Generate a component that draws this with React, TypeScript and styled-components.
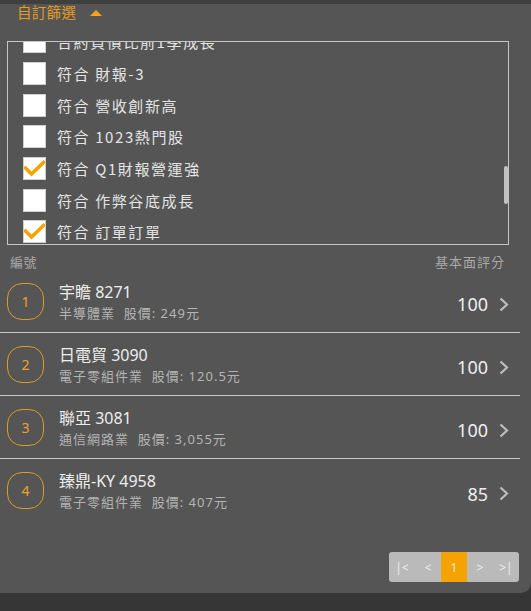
import React, { useLayoutEffect, useRef } from "react";
import styled, { createGlobalStyle } from "styled-components";

const Global = createGlobalStyle`
  html, body { margin: 0; padding: 0; background: #363636; }
  body { font-family: "Noto Sans", "Noto Sans CJK TC", sans-serif; }
  * { box-sizing: border-box; }
`;

const TopStrip = styled.div`
  height: 4px;
  background: #3f3f3f;
`;

const Panel = styled.div`
  background: #555555;
  border-bottom-right-radius: 10px;
  padding-bottom: 11px;
`;

const Header = styled.div`
  display: flex;
  align-items: center;
  gap: 14px;
  height: 16px;
  padding-left: 17px;
`;

const HeaderTitle = styled.span`
  color: #e39b24;
  font-family: "Noto Sans CJK TC", sans-serif;
  font-size: 14.5px;
  letter-spacing: 0.3px;
  line-height: 16px;
`;

const Triangle = styled.span`
  width: 0;
  height: 0;
  border-left: 6px solid transparent;
  border-right: 6px solid transparent;
  border-bottom: 6px solid #f2a41f;
  margin-top: 1px;
`;

const FilterBox = styled.div`
  position: relative;
  margin: 21px 22px 0 7px;
  height: 204px;
  border: 1px solid #c6c6c6;
`;

const FilterScroll = styled.div`
  height: 100%;
  overflow: hidden;
`;

const FilterRow = styled.label`
  display: flex;
  align-items: center;
  gap: 11px;
  height: 31.7px;
  padding-left: 15px;
  color: #e4e4e4;
  font-family: "Noto Sans CJK TC", sans-serif;
  font-size: 15px;
  letter-spacing: 1.6px;
  white-space: nowrap;
`;

const Box = styled.span`
  flex: none;
  width: 23px;
  height: 23px;
  background: #ffffff;
  border: 1px solid #cfcfcf;
  display: flex;
  align-items: center;
  justify-content: center;
`;

const Thumb = styled.div`
  position: absolute;
  right: 0;
  top: 124px;
  width: 4px;
  height: 38px;
  border-radius: 2px;
  background: #c2c2c2;
`;

const ColHeader = styled.div`
  display: flex;
  justify-content: space-between;
  height: 25px;
  padding: 9px 26px 0 10px;
  color: #a9a9a9;
  font-family: "Noto Sans CJK TC", sans-serif;
  font-size: 13px;
  line-height: 16px;
`;

const ColLabel = styled.span<{ $spacing?: number }>`
  letter-spacing: ${(p) => p.$spacing ?? 0.5}px;
`;

const List = styled.div`
  width: 520px;
`;

const Row = styled.div<{ $last?: boolean }>`
  display: flex;
  align-items: center;
  height: 63px;
  padding: 0 11px 0 7px;
  border-bottom: ${(p) => (p.$last ? "none" : "1px solid #c9c9c9")};
`;

const Badge = styled.div`
  flex: none;
  width: 37px;
  height: 37px;
  border: 1.5px solid #dc9b26;
  border-radius: 15px;
  display: flex;
  align-items: center;
  justify-content: center;
  color: #eda22a;
  font-size: 14px;
`;

const Info = styled.div`
  flex: 1;
  display: flex;
  flex-direction: column;
  margin-left: 15px;
  margin-top: 3px;
`;

const Name = styled.div`
  color: #ededed;
  font-size: 16px;
  line-height: 20px;
`;

const Sub = styled.div`
  color: #b4b4b4;
  font-size: 13px;
  line-height: 22px;
  letter-spacing: 1px;
  white-space: pre;
`;

const Score = styled.div`
  display: flex;
  align-items: center;
  gap: 11px;
  margin-top: 6px;
  color: #eeeeee;
  font-size: 18px;
`;

const PagerWrap = styled.div`
  display: flex;
  justify-content: flex-end;
  padding-right: 12px;
  margin-top: 30px;
`;

const Pager = styled.div`
  display: flex;
  height: 30px;
  background: #bababa;
  border-radius: 3px;
  overflow: hidden;
`;

const PageCell = styled.div<{ $active?: boolean }>`
  width: 26px;
  display: flex;
  align-items: center;
  justify-content: center;
  background: ${(p) => (p.$active ? "#f5a300" : "transparent")};
  color: ${(p) => (p.$active ? "#fbe9c8" : "#efefef")};
  font-size: 12px;
`;

const filters = [
  { label: "合約負債比前1季成長", checked: false },
  { label: "符合 財報-3", checked: false },
  { label: "符合 營收創新高", checked: false },
  { label: "符合 1023熱門股", checked: false },
  { label: "符合 Q1財報營運強", checked: true },
  { label: "符合 作弊谷底成長", checked: false },
  { label: "符合 訂單訂單", checked: true },
];

const stocks = [
  { n: 1, name: "宇瞻 8271", sub: "半導體業  股價: 249元", score: 100 },
  { n: 2, name: "日電貿 3090", sub: "電子零組件業  股價: 120.5元", score: 100 },
  { n: 3, name: "聯亞 3081", sub: "通信網路業  股價: 3,055元", score: 100 },
  { n: 4, name: "臻鼎-KY 4958", sub: "電子零組件業  股價: 407元", score: 85 },
];

const Check = () => (
  <svg width="21" height="17" viewBox="0 0 21 17">
    <polyline
      points="1.5,8 7.5,14 19.5,2.5"
      fill="none"
      stroke="#f5a300"
      strokeWidth="3.6"
      strokeLinecap="square"
    />
  </svg>
);

const Chevron = () => (
  <svg width="10" height="15" viewBox="0 0 10 15">
    <polyline
      points="1.5,1.5 8,7.5 1.5,13.5"
      fill="none"
      stroke="#bdbdbd"
      strokeWidth="2.2"
    />
  </svg>
);

export default function App() {
  const scrollRef = useRef<HTMLDivElement>(null);
  useLayoutEffect(() => {
    if (scrollRef.current) scrollRef.current.scrollTop = 16;
  }, []);
  return (
    <>
      <Global />
      <TopStrip />
      <Panel>
        <Header>
          <HeaderTitle>自訂篩選</HeaderTitle>
          <Triangle />
        </Header>
        <FilterBox>
          <FilterScroll ref={scrollRef}>
            {filters.map((f) => (
              <FilterRow key={f.label}>
                <Box>{f.checked && <Check />}</Box>
                <span>{f.label}</span>
              </FilterRow>
            ))}
          </FilterScroll>
          <Thumb />
        </FilterBox>
        <ColHeader>
          <ColLabel>編號</ColLabel>
          <ColLabel $spacing={1}>基本面評分</ColLabel>
        </ColHeader>
        <List>
          {stocks.map((s, i) => (
            <Row key={s.n} $last={i === stocks.length - 1}>
              <Badge>{s.n}</Badge>
              <Info>
                <Name>{s.name}</Name>
                <Sub>{s.sub}</Sub>
              </Info>
              <Score>
                {s.score}
                <Chevron />
              </Score>
            </Row>
          ))}
        </List>
        <PagerWrap>
          <Pager>
            <PageCell>|&lt;</PageCell>
            <PageCell>&lt;</PageCell>
            <PageCell $active>1</PageCell>
            <PageCell>&gt;</PageCell>
            <PageCell>&gt;|</PageCell>
          </Pager>
        </PagerWrap>
      </Panel>
    </>
  );
}
